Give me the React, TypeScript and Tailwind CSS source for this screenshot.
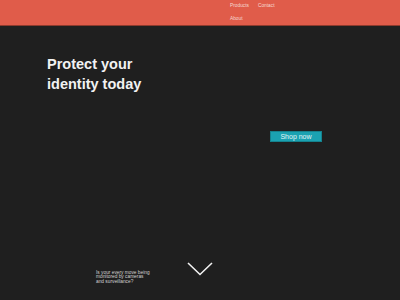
import React from "react";

export default function App() {
  return (
    <div
      className="w-[400px] h-[300px] overflow-hidden bg-[#1f1f1f]"
      style={{ fontFamily: '"Liberation Sans", Arial, sans-serif' }}
    >
      <header className="h-[26px] bg-[#e05c4a] border-b border-[#8e3a2d]">
        <nav className="ml-[230px] w-[60px] flex flex-wrap gap-x-[9px] text-[4.8px] leading-[12.5px] text-[#f6d9d2]">
          <span>Products</span>
          <span>Contact</span>
          <span>About</span>
        </nav>
      </header>
      <main className="pt-[28px]">
        <h1 className="ml-[47px] text-[14.5px] leading-[20px] font-bold text-[#f2f2f2]">
          Protect your
          <br />
          identity today
        </h1>
        <div className="mt-[37px] ml-[270px] flex">
          <button className="w-[52px] h-[11px] flex items-center justify-center bg-[#1ba2b1] border border-[#15828e] text-[7px] leading-[9px] text-[#e4f5f7]">
            Shop now
          </button>
        </div>
        <div className="mt-[120px] flex">
          <p className="ml-[96px] mt-[8.5px] w-[60px] text-[4.8px] leading-[4.5px] text-[#d2d2d2]">
            Is your every move being
            <br />
            monitored by cameras
            <br />
            and surveillance?
          </p>
          <svg
            className="ml-[31px]"
            width="26"
            height="14"
            viewBox="0 0 26 14"
            fill="none"
          >
            <polyline
              points="1,1 13,12.5 25,1"
              stroke="#f2f2f2"
              strokeWidth="1.6"
              fill="none"
            />
          </svg>
        </div>
      </main>
    </div>
  );
}
